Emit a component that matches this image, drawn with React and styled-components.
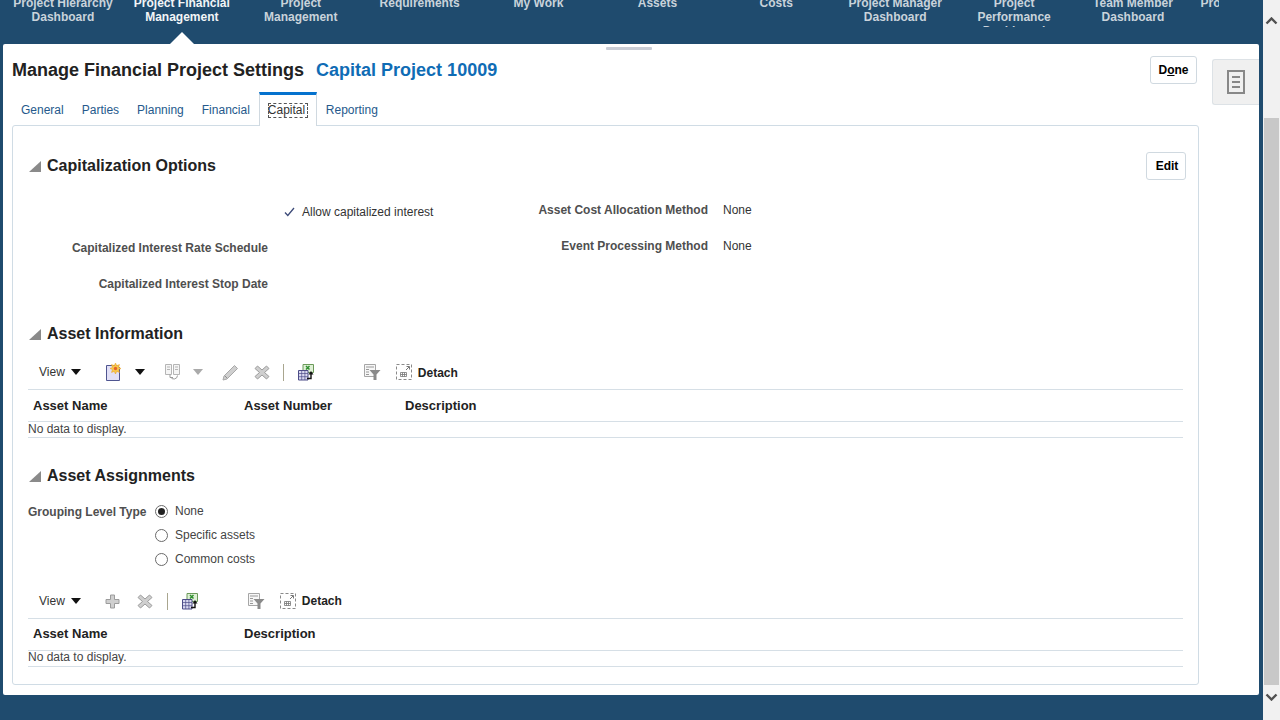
import React from "react";
import styled, { createGlobalStyle } from "styled-components";

const Global = createGlobalStyle`
  html, body { margin: 0; padding: 0; height: 100%; overflow: hidden; }
  body { font-family: "Liberation Sans", Arial, sans-serif; font-size: 12px; color: #333; }
`;
const Page = styled.div`
  display: flex; width: 1280px; height: 720px; background: #fff; overflow: hidden;
`;
const Shell = styled.div`
  width: 1263px; height: 720px; background: #1f4b6e; display: flex; flex-direction: column;
`;
const Nav = styled.nav`
  display: flex; height: 44px; flex: none; padding-left: 3.500px; overflow: hidden; box-sizing: border-box; width: 1219px;
`;
const NavItem = styled.div`
  position: relative; flex: none; width: 118.9px; height: 44px; text-align: center;
  font-weight: bold; font-size: 12px; line-height: 14px;
  color: ${p => (p.$active ? "#f2f5f7" : "#c9d3db")};
`;
const NavText = styled.div`
  margin-top: -4px; height: 31px; overflow: hidden; padding: 0 4px;
`;
const NavCaret = styled.span`
  position: absolute; left: 48px; bottom: 0; width: 0; height: 0;
  border-left: 12px solid transparent; border-right: 12px solid transparent; border-bottom: 12px solid #fff;
`;
const Panel = styled.main`
  position: relative; margin: 0 4px 0 3px; height: 651px; flex: none; background: #fff; border-radius: 2px;
  display: flex; box-sizing: border-box; padding: 0 0 10px 9px;
`;
const Handle = styled.span`
  position: absolute; left: 603px; top: 3px; width: 46px; height: 3px; background: #c9cdd6; border-radius: 1px;
`;
const Content = styled.div`
  width: 1187px; flex: none; display: flex; flex-direction: column;
`;
const TitleRow = styled.div`
  display: flex; align-items: center; height: 48px; box-sizing: border-box; padding-top: 4px;
`;
const Title = styled.h1`
  margin: 0; font-size: 18px; font-weight: bold; color: #222; line-height: 28px; white-space: nowrap;
`;
const ProjectName = styled(Title)`
  margin-left: 12px; color: #0f6cb5;
`;
const Button = styled.button`
  font: bold 12px "Liberation Sans", Arial, sans-serif; color: #000; background: #fff;
  border: 1px solid #d0d9e0; border-radius: 3px; height: 28px; padding: 0 0 0 ${p => p.$pl || 0}px; width: ${p => p.$w}px;
  margin-left: auto; flex: none; u { text-decoration: underline; }
`;
const TopButton = styled(Button)`
  margin-top: 0; margin-right: 2px;
`;
const Tabs = styled.div`
  display: flex; height: 33px; position: relative; z-index: 1;
`;
const Tab = styled.div`
  box-sizing: border-box; height: ${p => (p.$active ? 34 : 33)}px; padding: 3px 9px 0; line-height: 30px; color: #25598c;
  ${p => p.$active && `
    background: #fff; border: 1px solid #d0d9e0; border-bottom: none; border-top: 3px solid #0572ce;
    padding: 0 8px; color: #333;
  `}
`;
const Focused = styled.span`
  outline: 1px dashed #555; outline-offset: -1px; display: inline-block; width: 40px; line-height: 15px;
`;
const Card = styled.section`
  flex: 1; box-sizing: border-box; border: 1px solid #d0dce5; border-radius: 3px; padding: 26px 12px 0 15px;
`;
const SectionHead = styled.div`
  display: flex; align-items: center; height: 28px; margin-top: ${p => p.$mt || 0}px;
`;
const Disclosure = styled.span`
  width: 0; height: 0; flex: none; margin: 0 6px 0 1px;
  border-left: 12px solid transparent; border-bottom: 11px solid #8a8a8a;
`;
const Heading = styled.h2`
  margin: 0; font-size: 16px; font-weight: bold; color: #222;
`;
const Form = styled.div`
  display: flex; margin-top: 13px; margin-right: 3px;
`;
const Column = styled.div`
  width: ${p => p.$w}px; margin-top: ${p => p.$mt || 0}px; flex: none;
`;
const Row = styled.div`
  display: grid; grid-template-columns: ${p => p.$label}px 1fr; column-gap: ${p => p.$gap}px;
  height: 36px; align-items: center;
`;
const Label = styled.div`
  font-weight: bold; color: #4f4f4f; text-align: right; white-space: nowrap;
`;
const Value = styled.div`
  color: #333; display: flex; align-items: center; gap: 7px; white-space: nowrap;
`;
const Toolbar = styled.div`
  display: flex; align-items: center; height: 28px; padding-bottom: 3px; margin-top: ${p => p.$mt}px;
  border-bottom: 1px solid #d6dfe6; margin-right: 3px;
`;
const ViewMenu = styled.span`
  margin-left: 11px; color: #333; display: flex; align-items: center;
`;
const Tool = styled.svg`
  flex: none; margin-left: ${p => p.$ml || 0}px; display: block;
`;
const Separator = styled.span`
  width: 1px; height: 17px; background: #a9a68f; flex: none; margin-left: ${p => p.$ml}px;
`;
const DetachText = styled.span`
  font-weight: bold; color: #222; margin-left: 6px; padding-top: ${p => p.$pt || 0}px;
`;
const HeaderRow = styled.div`
  display: flex; height: ${p => p.$h || 31}px; padding-bottom: ${p => p.$pb || 0}px; align-items: center; padding-left: 5px;
  border-bottom: 1px solid #d6dfe6; margin-right: 3px; font-weight: bold; font-size: 13px; color: #222;
`;
const Col = styled.div`
  width: ${p => p.$w}px; flex: none;
`;
const EmptyRow = styled.div`
  height: ${p => p.$h || 15}px; padding-bottom: ${p => p.$pb || 0}px; line-height: ${p => p.$h || 15}px; font-size: 12px; color: #444;
  border-bottom: 1px solid #d6dfe6; margin-right: 3px;
`;
const RadioGrid = styled.div`
  display: grid; grid-template-columns: 119px 1fr; column-gap: 8px; margin-top: 9px;
`;
const RadioList = styled.div`
  display: flex; flex-direction: column;
`;
const RadioRow = styled.label`
  display: flex; align-items: center; height: 24px; gap: 7px; color: #444;
`;
const RadioLabel = styled(Label)`
  line-height: 26px; text-align: left;
`;
const RadioDot = styled.span`
  width: 13px; height: 13px; box-sizing: border-box; border-radius: 50%; border: 1px solid #6a6a6a; background: #fff;
  flex: none; display: flex; align-items: center; justify-content: center;
  &::after { content: ""; width: 7px; height: 7px; border-radius: 50%; background: ${p => (p.$on ? "#222" : "transparent")}; }
`;
const SideTab = styled.div`
  box-sizing: border-box; width: 47px; height: 46px; margin-top: 15px; margin-left: 13px; flex: none;
  background: #f0f0f0; border: 1px solid #dde2e6; border-right: none; border-radius: 3px 0 0 3px;
  display: flex; align-items: center; justify-content: center;
`;
const BottomBand = styled.div`
  flex: 1;
`;
const Scrollbar = styled.div`
  width: 17px; flex: none; height: 720px; background: #f1f1f1; display: flex; flex-direction: column; align-items: center;
`;
const ScrollButton = styled.div`
  height: ${p => p.$h}px; flex: none; display: flex; align-items: ${p => p.$align || "center"}; justify-content: center;
  width: 100%; box-sizing: border-box; padding-top: ${p => p.$pt || 0}px;
`;
const Thumb = styled.div`
  width: 15px; height: 567px; background: #c8c8c8; flex: none;
`;

const Caret = ({ ml = 0, color = "#111" }) => (
  <Tool $ml={ml} width="10" height="6" viewBox="0 0 10 6"><path d="M0 0h10L5 6z" fill={color} /></Tool>
);
const NewIcon = ({ ml }) => (
  <Tool $ml={ml} width="17" height="18" viewBox="0 0 17 18">
    <path d="M1.500 2.500h10l3 2v13h-13z" fill="#e2e0f6" stroke="#4f5590" />
    <path d="M10.500 0l1.200 2.600 2.800-1-1 2.800 2.500 1.100-2.500 1.100 1 2.800-2.800-1-1.200 2.600-1.200-2.600-2.800 1 1-2.800-2.500-1.100 2.500-1.100-1-2.800 2.800 1z" fill="#f9c94a" stroke="#e79a1f" strokeWidth=".5" />
    <circle cx="10.500" cy="5.500" r="1.700" fill="#e4622c" />
  </Tool>
);
const FreezeIcon = ({ ml }) => (
  <Tool $ml={ml} width="17" height="17" viewBox="0 0 17 17" fill="none" stroke="#b5b5b5">
    <path d="M1.500 .5h6v10h-6zM9.500 .5h6v10h-6z" fill="#f5f5f5" />
    <path d="M3 3h3M3 5.500h3M11 3h3M11 5.500h3" />
    <path d="M13.500 11.500a3.700 3.700 0 0 1-7 1.500M6 10.500v3h3" stroke="#9a9a9a" />
  </Tool>
);
const PencilIcon = ({ ml }) => (
  <Tool $ml={ml} width="17" height="17" viewBox="0 0 17 17">
    <path d="M12.500 1.500l3 3L5 15l-4 1 1-4z" fill="#cfcfcf" stroke="#a8a8a8" />
    <path d="M3 12l2 2" stroke="#8f8f8f" />
  </Tool>
);
const CrossIcon = ({ ml }) => (
  <Tool $ml={ml} width="16" height="15" viewBox="0 0 16 15">
    <path d="M3.500 1L8 5l4.500-4L15 3.500 10.500 7.500 15 11.500 12.500 14 8 10l-4.500 4L1 11.500 5.500 7.500 1 3.500z" fill="#cfcfcf" stroke="#9c9c9c" />
  </Tool>
);
const PlusIcon = ({ ml }) => (
  <Tool $ml={ml} width="15" height="15" viewBox="0 0 15 15">
    <path d="M5.500 1h4v4.500H14v4H9.500V14h-4V9.500H1v-4h4.500z" fill="#cfcfcf" stroke="#9c9c9c" />
  </Tool>
);
const ExportIcon = ({ ml }) => (
  <Tool $ml={ml} width="17" height="17" viewBox="0 0 17 17">
    <path d="M5 .5h10.500v8H5z" fill="#dff0d6" stroke="#6b9a5a" />
    <path d="M8 2l3.500 3.500M11.500 2L8 5.500" stroke="#2f8f2f" strokeWidth="1.500" />
    <path d="M.5 6.500h9.500v9.500H.5z" fill="#d9d9f0" stroke="#4d4d88" />
    <path d="M.5 9.500h9.500M.5 12.700h9.500M3.700 6.500v9.500M6.900 6.500v9.500" stroke="#4d4d88" strokeWidth=".7" />
    <path d="M9 14.500h4V10" fill="none" stroke="#111" strokeWidth="1.400" />
    <path d="M10.500 10.500L13 7l2.500 3.500z" fill="#111" />
  </Tool>
);
const FilterIcon = ({ ml }) => (
  <Tool $ml={ml} width="17" height="16" viewBox="0 0 17 16">
    <path d="M.5 .5h11v12h-11z" fill="#f7f7f7" stroke="#a6a6a6" />
    <path d="M2 3h8M2 5.500h3M2 8h3M2 10.500h3" stroke="#999" />
    <path d="M5.500 6h11l-4 4.500V16h-3v-5.500z" fill="#8a8a8a" />
  </Tool>
);
const DetachIcon = ({ ml }) => (
  <Tool $ml={ml} width="16" height="16" viewBox="0 0 16 16" fill="none">
    <path d="M.5 .5h15v15H.5z" stroke="#8a8a8a" strokeDasharray="3 2" />
    <path d="M4.500 8.500h6v4h-6zM4.500 10.500h6M6.500 8.500v4M8.500 8.500v4" stroke="#777" strokeWidth=".8" />
    <path d="M10 6l3-3M10.500 2.500h3v3" stroke="#777" />
  </Tool>
);

const navItems = [
  ["Project Hierarchy", "Dashboard"], ["Project Financial", "Management"], ["Project", "Management"],
  ["Requirements"], ["My Work"], ["Assets"], ["Costs"], ["Project Manager", "Dashboard"],
  ["Project", "Performance", "Dashboard"], ["Team Member", "Dashboard"], ["Project Templates"],
];
const tabs = ["General", "Parties", "Planning", "Financial", "Capital", "Reporting"];

export default function App() {
  return (
    <Page>
      <Global />
      <Shell>
        <Nav>
          {navItems.map((lines, i) => (
            <NavItem key={i} $active={i === 1}>
              <NavText>{lines.map(l => <div key={l}>{l}</div>)}</NavText>
              {i === 1 && <NavCaret />}
            </NavItem>
          ))}
        </Nav>
        <Panel>
          <Handle />
          <Content>
            <TitleRow>
              <Title>Manage Financial Project Settings</Title>
              <ProjectName>Capital Project 10009</ProjectName>
              <TopButton $w={47}>D<u>o</u>ne</TopButton>
            </TitleRow>
            <Tabs>
              {tabs.map(t => (
                <Tab key={t} $active={t === "Capital"}>{t === "Capital" ? <Focused>{t}</Focused> : t}</Tab>
              ))}
            </Tabs>
            <Card>
              <SectionHead>
                <Disclosure />
                <Heading>Capitalization Options</Heading>
                <Button $w={40} $pl={2}>Edit</Button>
              </SectionHead>
              <Form>
                <Column $w={500} $mt={1}>
                  <Row $label={240} $gap={16}>
                    <span />
                    <Value>
                      <Tool width="11" height="10" viewBox="0 0 11 10"><path d="M1 5.500l2.800 3L10 1" fill="none" stroke="#3c4a78" strokeWidth="1.300" /></Tool>
                      Allow capitalized interest
                    </Value>
                  </Row>
                  <Row $label={240} $gap={16}><Label>Capitalized Interest Rate Schedule</Label><span /></Row>
                  <Row $label={240} $gap={16}><Label>Capitalized Interest Stop Date</Label><span /></Row>
                </Column>
                <Column $w={400} $mt={-1}>
                  <Row $label={180} $gap={15}><Label>Asset Cost Allocation Method</Label><Value>None</Value></Row>
                  <Row $label={180} $gap={15}><Label>Event Processing Method</Label><Value>None</Value></Row>
                </Column>
              </Form>
              <SectionHead $mt={18}>
                <Disclosure />
                <Heading>Asset Information</Heading>
              </SectionHead>
              <Toolbar $mt={10}>
                <ViewMenu>View<Caret ml={6} /></ViewMenu>
                <NewIcon ml={24} />
                <Caret ml={13} />
                <FreezeIcon ml={19} />
                <Caret ml={12} color="#aaa" />
                <PencilIcon ml={19} />
                <CrossIcon ml={15} />
                <Separator $ml={13} />
                <ExportIcon ml={14} />
                <FilterIcon ml={49} />
                <DetachIcon ml={15} />
                <DetachText $pt={2}>Detach</DetachText>
              </Toolbar>
              <HeaderRow>
                <Col $w={211}>Asset Name</Col>
                <Col $w={161}>Asset Number</Col>
                <Col $w={200}>Description</Col>
              </HeaderRow>
              <EmptyRow>No data to display.</EmptyRow>
              <SectionHead $mt={24}>
                <Disclosure />
                <Heading>Asset Assignments</Heading>
              </SectionHead>
              <RadioGrid>
                <RadioLabel>Grouping Level Type</RadioLabel>
                <RadioList>
                  <RadioRow><RadioDot $on />None</RadioRow>
                  <RadioRow><RadioDot />Specific assets</RadioRow>
                  <RadioRow><RadioDot />Common costs</RadioRow>
                </RadioList>
              </RadioGrid>
              <Toolbar $mt={16}>
                <ViewMenu>View<Caret ml={6} /></ViewMenu>
                <PlusIcon ml={24} />
                <CrossIcon ml={17} />
                <Separator $ml={14} />
                <ExportIcon ml={14} />
                <FilterIcon ml={49} />
                <DetachIcon ml={15} />
                <DetachText>Detach</DetachText>
              </Toolbar>
              <HeaderRow $h={29} $pb={2}>
                <Col $w={211}>Asset Name</Col>
                <Col $w={200}>Description</Col>
              </HeaderRow>
              <EmptyRow $h={13} $pb={2}>No data to display.</EmptyRow>
            </Card>
          </Content>
          <SideTab>
            <Tool width="18" height="24" viewBox="0 0 18 24" fill="none" stroke="#888" strokeWidth="2">
              <path d="M1 1h16v22H1z" /><path d="M5 7h8M5 12h8M5 17h8" />
            </Tool>
          </SideTab>
        </Panel>
        <BottomBand />
      </Shell>
      <Scrollbar>
        <ScrollButton $h={118} $align="flex-start" $pt={17}>
          <Tool width="13" height="8" viewBox="0 0 13 8"><path d="M1.500 6.500l5-5 5 5" fill="none" stroke="#505050" strokeWidth="2.400" /></Tool>
        </ScrollButton>
        <Thumb />
        <ScrollButton $h={35} $align="flex-start" $pt={8}>
          <Tool width="13" height="8" viewBox="0 0 13 8"><path d="M1.500 1.500l5 5 5-5" fill="none" stroke="#505050" strokeWidth="2.400" /></Tool>
        </ScrollButton>
      </Scrollbar>
    </Page>
  );
}
